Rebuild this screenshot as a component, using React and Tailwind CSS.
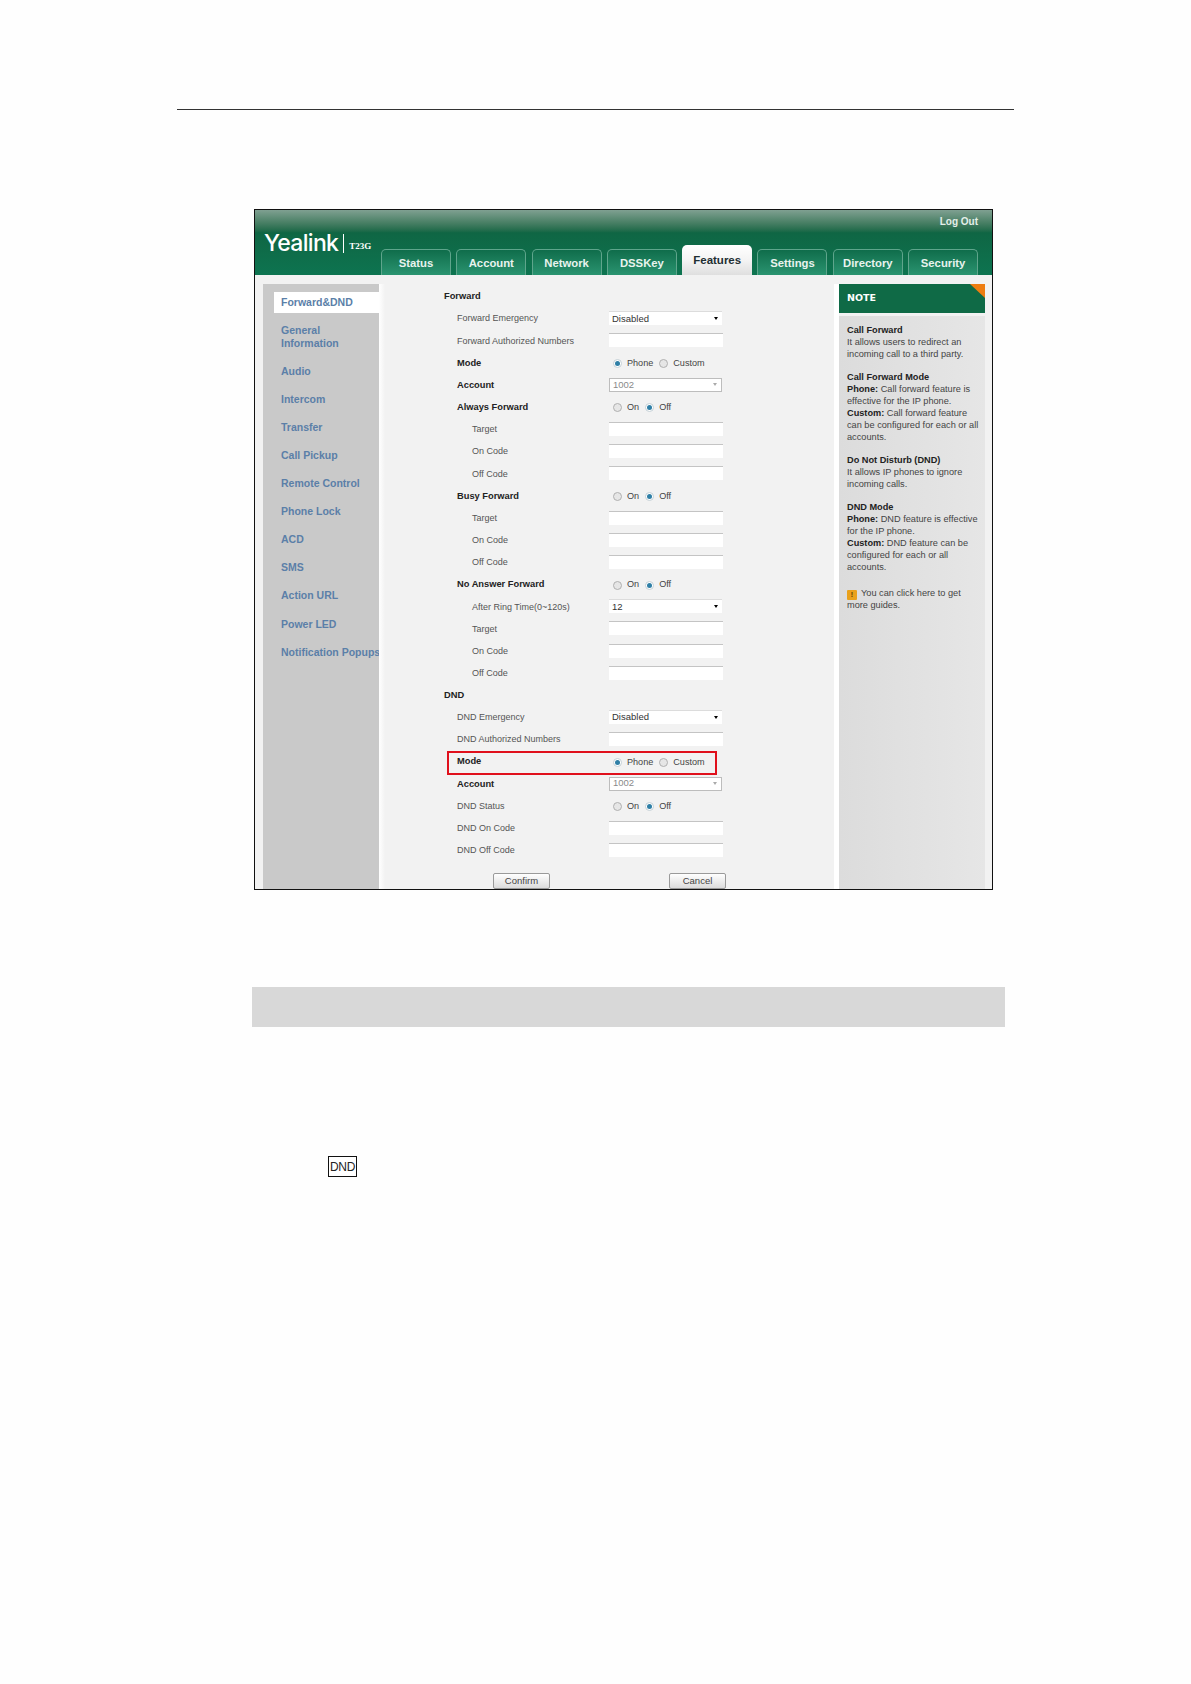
const tabs = ["Status", "Account", "Network", "DSSKey", "Features", "Settings", "Directory", "Security"];

const sideItems = ["Audio", "Intercom", "Transfer", "Call Pickup", "Remote Control", "Phone Lock", "ACD", "SMS", "Action URL", "Power LED", "Notification Popups"];

function Tab({ label }) {
  if (label === "Features") {
    return (
      <div className="flex h-[30px] w-[70px] justify-center rounded-t-[5px] bg-gradient-to-b from-white via-[#f4f4f4] to-[#dfdfdf] pt-[7px] text-[11.5px] font-bold leading-[16px] text-[#1f2f33]">
        {label}
      </div>
    );
  }
  return (
    <div className="flex h-[26px] w-[70px] items-center justify-center rounded-t-[5px] border border-b-0 border-[#5fa58c] bg-gradient-to-b from-[#0f6d4b] to-[#2a9470] pt-[1px] text-[11.3px] font-bold text-[#e8f3ee]">
      {label}
    </div>
  );
}

function Radio({ checked }) {
  return checked ? (
    <span className="inline-flex h-[9px] w-[9px] items-center justify-center rounded-full border border-[#c4d0d6] bg-white">
      <span className="h-[5px] w-[5px] rounded-full bg-[#2f7fa6]" />
    </span>
  ) : (
    <span className="inline-flex h-[9px] w-[9px] rounded-full border border-[#b0b0b0] bg-[#e6e6e6]" />
  );
}

function RadioPair({ left, right, leftOn }) {
  return (
    <div className="flex items-center pl-[4px] text-[9.1px] text-[#444]">
      <Radio checked={leftOn} />
      <span className="ml-[5px]">{left}</span>
      <span className="ml-[6px] inline-flex">
        <Radio checked={!leftOn} />
      </span>
      <span className="ml-[5px]">{right}</span>
    </div>
  );
}

function Input() {
  return <div className="mb-[2px] h-[14px] w-[114px] border-t border-[#c4c4c4] bg-white" />;
}

function Select({ value, disabled }) {
  return (
    <div className={`mb-[2px] flex h-[14px] w-[113px] items-center justify-between pl-[3px] pr-[4px] text-[9.5px] ${disabled ? "border border-[#bdbdbd] text-[#8a8a8a]" : "border-t border-[#dcdcdc] text-[#333]"} bg-white`}>
      <span>{value}</span>
      <span className={`h-0 w-0 border-x-[2.5px] border-t-[3px] border-x-transparent ${disabled ? "border-t-[#aaa]" : "border-t-black"}`} />
    </div>
  );
}

function Row({ label, level = 1, bold, children }) {
  const pad = level === 0 ? "pl-0" : level === 1 ? "pl-[13px]" : "pl-[28px]";
  return (
    <div className="flex h-[22.17px] items-center">
      <div className={`w-[165px] shrink-0 ${pad} ${bold ? "text-[9.3px] font-bold text-[#222]" : "text-[9px] text-[#555]"}`}>
        {label}
      </div>
      {children}
    </div>
  );
}

const onOff = <RadioPair left="On" right="Off" leftOn={false} />;
const phoneCustom = <RadioPair left="Phone" right="Custom" leftOn />;

function NoteBlock({ children }) {
  return <p className="mb-[11.4px]">{children}</p>;
}

export default function App() {
  return (
    <div className="h-[1684px] w-[1191px] bg-[#fefefe] pl-[177px] pt-[109px] font-['Liberation_Sans',sans-serif]">
      <div className="w-[837px] border-t border-[#333]" />

      <div className="ml-[77px] mt-[99px] flex h-[681px] w-[739px] flex-col overflow-hidden border border-[#111] bg-[#f2f2f2]">
        {/* header */}
        <div className="relative flex h-[65px] shrink-0 items-end bg-gradient-to-b from-[#7fa091] via-[#0f6644] via-35% to-[#0d7450] pl-[126px]">
          <div className="absolute left-[9px] top-[20px] flex items-center text-white">
            <span className="font-['Inter',sans-serif] text-[23px] font-medium leading-[26px] tracking-[-0.7px]">Yealink</span>
            <span className="ml-[5px] h-[19px] w-px bg-white" />
            <span className="ml-[5px] mt-[7px] font-['Liberation_Serif',serif] text-[9px] font-bold">T23G</span>
          </div>
          <div className="absolute right-[14px] top-[4px] text-[10px] font-bold text-[#e4efe9]">Log Out</div>
          <div className="flex items-end gap-[5.3px]">
            {tabs.map((t) => (
              <Tab key={t} label={t} />
            ))}
          </div>
        </div>

        <div className="flex min-h-0 flex-1 pl-[8px] pr-[7px] pt-[9px]">
          {/* sidebar */}
          <div className="w-[116px] shrink-0 bg-[#c9c9c9] pt-[8px] text-[10.5px] font-bold text-[#5b7fa8]">
            <div className="ml-[11px] flex h-[21px] items-center bg-white pl-[7px]">Forward&amp;DND</div>
            <div className="ml-[18px] mt-[11px] leading-[13px]">
              General
              <br />
              Information
            </div>
            <div className="mt-[7.5px] flex flex-col">
              {sideItems.map((s) => (
                <div key={s} className="flex h-[28.1px] items-center whitespace-nowrap pl-[18px]">
                  {s}
                </div>
              ))}
            </div>
          </div>

          {/* form */}
          <div className="w-[6px] shrink-0 bg-gradient-to-r from-white to-[#f2f2f2]" />
          <div className="w-[59px] shrink-0" />
          <div className="w-[390px] shrink-0 pt-[2px]">
            <Row label="Forward" level={0} bold />
            <Row label="Forward Emergency"><Select value="Disabled" /></Row>
            <Row label="Forward Authorized Numbers"><Input /></Row>
            <Row label="Mode" bold>{phoneCustom}</Row>
            <Row label="Account" bold><Select value="1002" disabled /></Row>
            <Row label="Always Forward" bold>{onOff}</Row>
            <Row label="Target" level={2}><Input /></Row>
            <Row label="On Code" level={2}><Input /></Row>
            <Row label="Off Code" level={2}><Input /></Row>
            <Row label="Busy Forward" bold>{onOff}</Row>
            <Row label="Target" level={2}><Input /></Row>
            <Row label="On Code" level={2}><Input /></Row>
            <Row label="Off Code" level={2}><Input /></Row>
            <Row label="No Answer Forward" bold>{onOff}</Row>
            <Row label="After Ring Time(0~120s)" level={2}><Select value="12" /></Row>
            <Row label="Target" level={2}><Input /></Row>
            <Row label="On Code" level={2}><Input /></Row>
            <Row label="Off Code" level={2}><Input /></Row>
            <Row label="DND" level={0} bold />
            <Row label="DND Emergency"><Select value="Disabled" /></Row>
            <Row label="DND Authorized Numbers"><Input /></Row>
            <div className="relative">
              <Row label="Mode" bold>{phoneCustom}</Row>
              <div className="absolute left-[3px] top-0 h-[24px] w-[270px] border-2 border-[#e0101c]" />
            </div>
            <Row label="Account" bold><Select value="1002" disabled /></Row>
            <Row label="DND Status">{onOff}</Row>
            <Row label="DND On Code"><Input /></Row>
            <Row label="DND Off Code"><Input /></Row>
            <div className="mt-[11px] flex pl-[49px]">
              <div className="flex h-[16px] w-[57px] items-center justify-center rounded-[2px] border border-[#9a9a9a] bg-gradient-to-b from-white to-[#dcdcdc] text-[9.5px] text-[#444]">Confirm</div>
              <div className="ml-[119px] flex h-[16px] w-[57px] items-center justify-center rounded-[2px] border border-[#9a9a9a] bg-gradient-to-b from-white to-[#dcdcdc] text-[9.5px] text-[#444]">Cancel</div>
            </div>
          </div>

          {/* note */}
          <div className="w-[5px] shrink-0 bg-white" />
          <div className="flex w-[146px] shrink-0 flex-col">
            <div className="relative flex h-[29px] items-center bg-[#0f6a46] pl-[8px] font-['DejaVu_Sans',sans-serif] text-[9.5px] font-bold text-white">
              NOTE
              <span className="absolute right-0 top-0 h-0 w-0 border-l-[15px] border-t-[14px] border-l-transparent border-t-[#ee7d11]" />
            </div>
            <div className="mt-[3px] flex-1 bg-gradient-to-r from-[#dcdcdc] to-[#e6e6e6] pl-[8px] pt-[9px] text-[9.2px] leading-[11.9px] text-[#444]">
              <NoteBlock>
                <b className="text-[#222]">Call Forward</b><br />
                It allows users to redirect an<br />
                incoming call to a third party.
              </NoteBlock>
              <NoteBlock>
                <b className="text-[#222]">Call Forward Mode</b><br />
                <b className="text-[#222]">Phone:</b> Call forward feature is<br />
                effective for the IP phone.<br />
                <b className="text-[#222]">Custom:</b> Call forward feature<br />
                can be configured for each or all<br />
                accounts.
              </NoteBlock>
              <NoteBlock>
                <b className="text-[#222]">Do Not Disturb (DND)</b><br />
                It allows IP phones to ignore<br />
                incoming calls.
              </NoteBlock>
              <NoteBlock>
                <b className="text-[#222]">DND Mode</b><br />
                <b className="text-[#222]">Phone:</b> DND feature is effective<br />
                for the IP phone.<br />
                <b className="text-[#222]">Custom:</b> DND feature can be<br />
                configured for each or all<br />
                accounts.
              </NoteBlock>
              <p className="mt-[15px]">
                <span className="mr-[4px] inline-flex h-[10px] w-[10px] items-center justify-center rounded-[1px] bg-[#e9a11c] align-[-1px] text-[7px] font-bold text-[#5a3b00]">!</span>
                You can click here to get<br />
                more guides.
              </p>
            </div>
          </div>
        </div>
      </div>

      <div className="ml-[75px] mt-[97px] h-[40px] w-[753px] bg-[#d8d8d8]" />

      <div className="ml-[151px] mt-[129px] flex h-[21px] w-[29px] items-center justify-center border border-[#111] bg-white text-[12px] tracking-[-0.4px] text-[#222]">
        DND
      </div>
    </div>
  );
}
